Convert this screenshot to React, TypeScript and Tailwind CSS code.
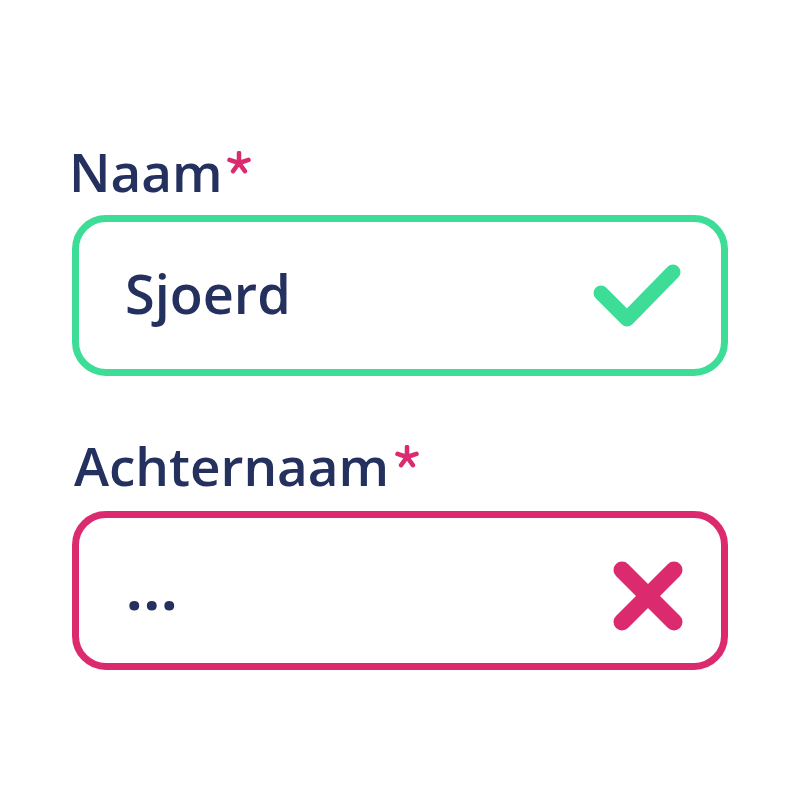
import React from "react";

const font = { fontFamily: '"Open Sans", "Noto Sans", sans-serif' };

function Check() {
  return (
    <svg width="90" height="66" viewBox="0 0 90 66" fill="none">
      <polyline
        points="9,30 35,56 81,9"
        stroke="#3ddc97"
        strokeWidth="15"
        strokeLinecap="round"
        strokeLinejoin="round"
      />
    </svg>
  );
}

function Cross() {
  return (
    <svg width="70" height="70" viewBox="0 0 70 70" fill="none">
      <path
        d="M9 9 L61 61 M61 9 L9 61"
        stroke="#dc2a6e"
        strokeWidth="17"
        strokeLinecap="round"
      />
    </svg>
  );
}

function Star() {
  return (
    <svg width="24" height="24" viewBox="0 0 24 24" fill="none">
      <path
        d="M12 12 L12 2 M12 12 L21.5 8.9 M12 12 L17.9 20.1 M12 12 L6.1 20.1 M12 12 L2.5 8.9"
        stroke="#dc2a6e"
        strokeWidth="4.5"
        strokeLinecap="round"
      />
    </svg>
  );
}

export default function App() {
  return (
    <div
      className="w-[800px] h-[800px] bg-white flex flex-col px-[72px] pt-[145px]"
      style={font}
    >
      <div className="flex items-start text-[53px] leading-none font-semibold text-[#24305e]">
        <span className="-ml-[3px]">Naam</span>
        <span className="ml-[4px] mt-[6px]">
          <Star />
        </span>
      </div>
      <div className="mt-[17px] h-[161px] w-[656px] rounded-[34px] border-[7px] border-[#3ddc97] flex items-center justify-between pl-[46px] pr-[39px]">
        <span className="text-[54px] leading-none font-semibold text-[#24305e] pb-[6px]">
          Sjoerd
        </span>
        <Check />
      </div>
      <div className="mt-[63px] flex items-start text-[53px] leading-none font-semibold text-[#24305e]">
        <span className="ml-[2px]">Achternaam</span>
        <span className="ml-[6px] mt-[6px]">
          <Star />
        </span>
      </div>
      <div className="mt-[19px] h-[159px] w-[656px] rounded-[34px] border-[7px] border-[#dc2a6e] flex items-center justify-between pl-[47px] pr-[38px]">
        <span className="text-[58px] leading-none font-bold text-[#24305e] pb-[6px] tracking-[1px]">
          ...
        </span>
        <span className="mt-[10px]">
          <Cross />
        </span>
      </div>
    </div>
  );
}
